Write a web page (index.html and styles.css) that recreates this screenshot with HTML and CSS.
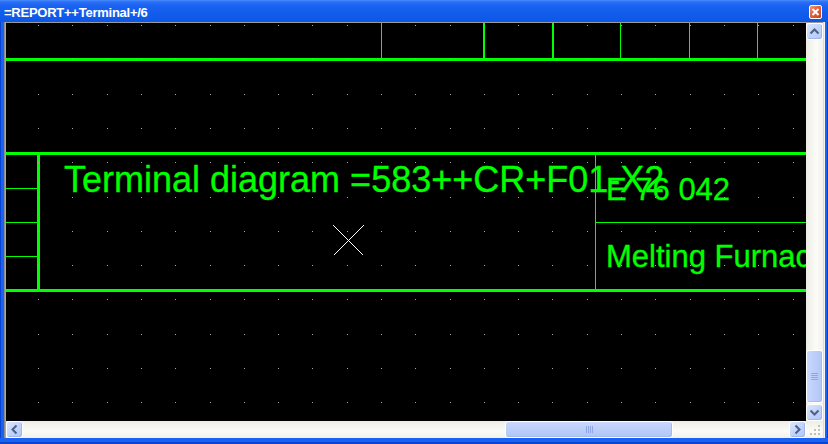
FILE: index.html
```html
<!DOCTYPE html>
<html>
<head>
<meta charset="utf-8">
<link rel="stylesheet" href="styles.css">
</head>
<body>
<div class="window">
  <div class="titlebar">
    <span class="title">=REPORT++Terminal+/6</span>
    <span class="close"><svg width="11" height="12" viewBox="0 0 11 12"><path class="close-x" d="M2.5 3 L8.5 9 M8.5 3 L2.5 9"/></svg></span>
  </div>
  <div class="body">
    <div class="edge-left"></div>
    <div class="client">
      <div class="main">
        <div class="canvas">
          <svg class="drawing" width="800" height="398" viewBox="0 0 800 398">
            <defs>
              <g id="dotrow" class="dot">
                <rect x="32" y="0" width="1" height="1"/><rect x="66" y="0" width="1" height="1"/><rect x="101" y="0" width="1" height="1"/><rect x="135" y="0" width="1" height="1"/><rect x="169" y="0" width="1" height="1"/><rect x="204" y="0" width="1" height="1"/><rect x="238" y="0" width="1" height="1"/><rect x="272" y="0" width="1" height="1"/><rect x="306" y="0" width="1" height="1"/><rect x="341" y="0" width="1" height="1"/><rect x="375" y="0" width="1" height="1"/><rect x="409" y="0" width="1" height="1"/><rect x="444" y="0" width="1" height="1"/><rect x="478" y="0" width="1" height="1"/><rect x="512" y="0" width="1" height="1"/><rect x="546" y="0" width="1" height="1"/><rect x="581" y="0" width="1" height="1"/><rect x="615" y="0" width="1" height="1"/><rect x="649" y="0" width="1" height="1"/><rect x="684" y="0" width="1" height="1"/><rect x="718" y="0" width="1" height="1"/><rect x="752" y="0" width="1" height="1"/><rect x="787" y="0" width="1" height="1"/>
              </g>
            </defs>
            <g class="ln">
              <rect x="0" y="35" width="800" height="3"/>
              <rect x="375" y="0" width="1" height="35"/>
              <rect x="477" y="0" width="2" height="35"/>
              <rect x="546" y="0" width="2" height="35"/>
              <rect x="614" y="0" width="1" height="35"/>
              <rect x="683" y="0" width="1" height="35"/>
              <rect x="751" y="0" width="1" height="35"/>
              <rect x="0" y="129" width="800" height="3"/>
              <rect x="0" y="266" width="800" height="3"/>
              <rect x="31" y="132" width="3" height="134"/>
              <rect x="0" y="165" width="31" height="1"/>
              <rect x="0" y="199" width="31" height="1"/>
              <rect x="0" y="233" width="31" height="1"/>
              <rect x="589" y="132" width="1" height="134"/>
              <rect x="590" y="199" width="210" height="1"/>
            </g>
            <text class="txt big" x="58" y="169">Terminal diagram =583++CR+F01-X2</text>
            <text class="txt mid" x="600" y="177">E 76 042</text>
            <text class="txt mid" x="600" y="244">Melting Furnace</text>
            <use href="#dotrow" y="2"/><use href="#dotrow" y="36"/><use href="#dotrow" y="71"/><use href="#dotrow" y="105"/><use href="#dotrow" y="139"/><use href="#dotrow" y="174"/><use href="#dotrow" y="208"/><use href="#dotrow" y="242"/><use href="#dotrow" y="276"/><use href="#dotrow" y="311"/><use href="#dotrow" y="345"/><use href="#dotrow" y="379"/>
            <path class="cursor" d="M327.5 202.5 L357.5 232.5 M357.5 202.5 L327.5 232.5"/>
          </svg>
        </div>
        <div class="vscroll">
          <div class="sbtn"><svg width="15" height="15" viewBox="0 0 15 15"><path class="chev" d="M3.5 9.5 L7.5 5.5 L11.5 9.5"/></svg></div>
          <div class="vtrack">
            <div class="vthumb"><svg width="9" height="9" viewBox="0 0 9 9"><path class="grip" d="M1 1.5h7M1 3.5h7M1 5.5h7M1 7.5h7"/></svg></div>
          </div>
          <div class="sbtn"><svg width="15" height="15" viewBox="0 0 15 15"><path class="chev" d="M3.5 5.5 L7.5 9.5 L11.5 5.5"/></svg></div>
        </div>
      </div>
      <div class="hrow">
        <div class="hscroll">
          <div class="sbtn"><svg width="15" height="15" viewBox="0 0 15 15"><path class="chev" d="M9.5 3.5 L5.5 7.5 L9.5 11.5"/></svg></div>
          <div class="htrack">
            <div class="hthumb"><svg width="9" height="9" viewBox="0 0 9 9"><path class="grip" d="M1.5 1v7M3.5 1v7M5.5 1v7M7.5 1v7"/></svg></div>
          </div>
          <div class="sbtn"><svg width="15" height="15" viewBox="0 0 15 15"><path class="chev" d="M5.5 3.5 L9.5 7.5 L5.5 11.5"/></svg></div>
        </div>
        <div class="sizegrip"><svg width="17" height="17" viewBox="0 0 17 17"><g class="gripdot"><rect x="12" y="4" width="2" height="2"/><rect x="8" y="8" width="2" height="2"/><rect x="12" y="8" width="2" height="2"/><rect x="4" y="12" width="2" height="2"/><rect x="8" y="12" width="2" height="2"/><rect x="12" y="12" width="2" height="2"/></g></svg></div>
      </div>
    </div>
    <div class="edge-right"></div>
  </div>
  <div class="edge-bottom"></div>
</div>
</body>
</html>
```

FILE: styles.css
```css
* { box-sizing: border-box; margin: 0; padding: 0; }
html, body { width: 828px; height: 444px; overflow: hidden; background: #0b4fe2; }
body { font-family: "Liberation Sans", Arial, sans-serif; }

.window { width: 828px; height: 444px; display: flex; flex-direction: column; }

.titlebar {
  height: 22px; display: flex; align-items: flex-start;
  background: linear-gradient(#4a8cfb 0, #2a6ff6 2px, #1a63f1 6px, #125cec 60%, #0e57e6 100%);
  color: #fff;
}
.title { font-weight: bold; font-size: 13px; line-height: 18px; padding: 4px 0 0 4px; letter-spacing: -0.25px; white-space: nowrap; }
.close {
  margin-left: auto; margin-top: 5px; margin-right: 6px;
  width: 13px; height: 14px; border: 1px solid #fff; border-radius: 2px;
  background: linear-gradient(135deg, #ef9a78 0%, #e2603a 45%, #c8431d 100%);
  display: flex; align-items: center; justify-content: center;
}
.close-x { stroke: #fff; stroke-width: 2; fill: none; }

.body { height: 416px; display: flex; }
.edge-left { width: 6px; background: linear-gradient(to right, #0843d2 0 1px, #1a63f2 1px 4px, #8c8c8c 4px 5px, #a8a8a8 5px 6px); }
.edge-right { width: 5px; background: linear-gradient(to right, #dcdcdc 0 1px, #f4f4f4 1px 2px, #1a63f2 2px 4px, #0843d2 4px 5px); }
.edge-bottom { height: 6px; background: linear-gradient(#1a63f2 0 4px, #0843d2 4px 6px); }

.client { width: 817px; display: flex; flex-direction: column; border-top: 1px solid #9a9a9a; }
.main { height: 398px; display: flex; }
.canvas { width: 800px; height: 398px; background: #000; overflow: hidden; }
.drawing { display: block; }
.ln rect { fill: #00ff00; shape-rendering: crispEdges; }
.dot rect { fill: #a8a8a8; shape-rendering: crispEdges; }
.txt { fill: #00ff00; font-family: "Liberation Sans", Arial, sans-serif; stroke: #00ff00; stroke-width: 0.3px; }
.big { font-size: 36px; }
.mid { font-size: 31px; }
.cursor { stroke: #ffffff; stroke-width: 1; fill: none; shape-rendering: crispEdges; }

.vscroll { width: 17px; display: flex; flex-direction: column; background: linear-gradient(to right, #eeede5, #fbfbf8 60%, #f3f1ea); }
.vtrack { flex: 1; display: flex; flex-direction: column; }
.vthumb {
  margin-top: auto; margin-bottom: 1px; height: 53px; width: 17px;
  border: 1px solid #fff; border-radius: 3px;
  background: linear-gradient(to right, #c9d8fc, #bccffa 50%, #b1c6f7);
  box-shadow: inset -1px -1px 0 #a5bbef;
  display: flex; align-items: center; justify-content: center;
}
.hrow { height: 17px; display: flex; }
.hscroll { width: 800px; display: flex; background: linear-gradient(#eeede5, #fbfbf8 60%, #f3f1ea); }
.htrack { flex: 1; display: flex; }
.hthumb {
  margin-left: 482px; width: 168px; height: 17px;
  border: 1px solid #fff; border-radius: 3px;
  background: linear-gradient(#c9d8fc, #bccffa 50%, #b1c6f7);
  box-shadow: inset -1px -1px 0 #a5bbef;
  display: flex; align-items: center; justify-content: center;
}
.sbtn {
  width: 17px; height: 17px; flex: none;
  border: 1px solid #fff; border-radius: 3px;
  background: linear-gradient(135deg, #dce6fd 0%, #c3d4fb 50%, #b3c8f7 100%);
  box-shadow: inset -1px -1px 0 #a0b6ec;
  display: flex; align-items: center; justify-content: center;
}
.chev { stroke: #4d6185; stroke-width: 2; fill: none; }
.grip { stroke: #8ea6e4; stroke-width: 1; fill: none; shape-rendering: crispEdges; }
.sizegrip { width: 17px; height: 17px; background: linear-gradient(#eeede5, #fbfbf8 60%, #f3f1ea); }
.sizegrip svg { display: block; }
.gripdot rect { fill: #c3c0b2; }
```
